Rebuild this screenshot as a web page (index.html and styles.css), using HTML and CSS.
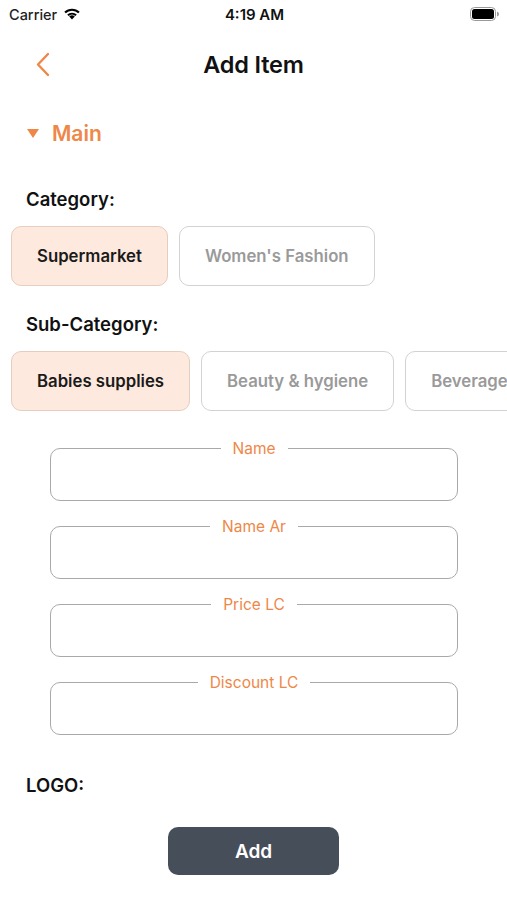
FILE: index.html
```html
<!DOCTYPE html>
<html>
<head>
<meta charset="utf-8">
<link rel="stylesheet" href="styles.css">
</head>
<body>
<div class="screen">
  <div class="status">
    <div class="status-left">
      <span class="carrier">Carrier</span>
      <svg class="wifi" width="18" height="13" viewBox="0 0 18 13">
        <path d="M9 12.5 L6.2 9.6 A4 4 0 0 1 11.8 9.6 Z" fill="#000"/>
        <path d="M4.2 7.6 A6.9 6.9 0 0 1 13.8 7.6 L12.4 9 A5 5 0 0 0 5.6 9 Z" fill="#000"/>
        <path d="M1.3 4.8 A11 11 0 0 1 16.7 4.8 L15.2 6.3 A8.9 8.9 0 0 0 2.8 6.3 Z" fill="#000"/>
      </svg>
    </div>
    <div class="time">4:19 AM</div>
    <div class="status-right">
      <svg width="30" height="14" viewBox="0 0 30 14">
        <rect x="0.5" y="0.5" width="25" height="13" rx="4" fill="none" stroke="#999" stroke-width="1"/>
        <rect x="2" y="2" width="22" height="10" rx="2.5" fill="#000"/>
        <path d="M27 4.5 Q29 5 29 7 Q29 9 27 9.5 Z" fill="#999"/>
      </svg>
    </div>
  </div>

  <div class="nav">
    <div class="nav-left">
      <svg width="16" height="25" viewBox="0 0 16 25">
        <path d="M13 2 L3 12.5 L13 23" fill="none" stroke="#EE8748" stroke-width="2.4" stroke-linecap="round" stroke-linejoin="round"/>
      </svg>
    </div>
    <div class="nav-title">Add Item</div>
    <div></div>
  </div>

  <div class="section-head">
    <span class="tri"></span>
    <span class="section-title">Main</span>
  </div>

  <div class="label label-cat">Category:</div>
  <div class="chips">
    <div class="chip selected">Supermarket</div>
    <div class="chip">Women's Fashion</div>
  </div>

  <div class="label label-sub">Sub-Category:</div>
  <div class="chips">
    <div class="chip selected">Babies supplies</div>
    <div class="chip">Beauty &amp; hygiene</div>
    <div class="chip">Beverages</div>
  </div>

  <div class="fields">
    <fieldset class="field"><legend>Name</legend><div class="field-body"></div></fieldset>
    <fieldset class="field"><legend>Name Ar</legend><div class="field-body"></div></fieldset>
    <fieldset class="field"><legend>Price LC</legend><div class="field-body"></div></fieldset>
    <fieldset class="field"><legend>Discount LC</legend><div class="field-body"></div></fieldset>
  </div>

  <div class="label label-logo">LOGO:</div>

  <div class="actions">
    <button class="add-btn">Add</button>
  </div>
</div>
</body>
</html>
```

FILE: styles.css
```css
* { box-sizing: border-box; }
html, body { margin: 0; padding: 0; background: #fff; }
body {
  font-family: Inter, "Noto Sans", "Liberation Sans", sans-serif;
  color: #111;
}
.screen {
  width: 507px;
  height: 900px;
  overflow: hidden;
}
.status {
  height: 28px;
  display: grid;
  grid-template-columns: 1fr auto 1fr;
  align-items: center;
  padding: 0 7px 0 9px;
}
.status-left { display: flex; align-items: center; gap: 6px; }
.carrier { font-size: 14.5px; font-weight: 500; color: #222; }
.wifi { margin-top: -2px; }
.time { font-size: 15px; font-weight: 600; color: #111; }
.status-right { display: flex; justify-content: flex-end; }

.nav {
  margin-top: 14px;
  height: 44px;
  display: grid;
  grid-template-columns: 1fr auto 1fr;
  align-items: center;
}
.nav-left { padding-left: 35px; display: flex; align-items: center; }
.nav-title { font-size: 23.5px; font-weight: 600; color: #111; letter-spacing: -0.2px; }

.section-head {
  margin-top: 35px;
  height: 24px;
  display: flex;
  align-items: center;
  padding-left: 27px;
  gap: 13px;
}
.tri {
  width: 0; height: 0;
  border-left: 6.5px solid transparent;
  border-right: 6.5px solid transparent;
  border-top: 9px solid #EE8748;
}
.section-title { font-size: 21px; font-weight: 600; color: #EE8748; }

.label {
  height: 22px;
  line-height: 22px;
  padding-left: 26px;
  font-size: 18.5px;
  font-weight: 600;
  color: #111;
}
.label-cat { margin-top: 43px; }
.label-sub { margin-top: 27px; }
.label-logo { margin-top: 39px; }

.chips {
  margin-top: 16px;
  display: flex;
  gap: 11px;
  padding-left: 11px;
  overflow: hidden;
  white-space: nowrap;
}
.chip {
  flex-shrink: 0;
  height: 60px;
  padding: 0 25px;
  display: flex;
  align-items: center;
  border: 1px solid #D2D2D2;
  border-radius: 10px;
  font-size: 16.75px;
  font-weight: 600;
  color: #9A9A9A;
  background: #fff;
}
.chip.selected {
  background: #FDE9DE;
  border-color: #E6CDC0;
  color: #1a1a1a;
}

.fields {
  margin-top: 27px;
  padding: 0 49px 0 50px;
  display: flex;
  flex-direction: column;
  gap: 15px;
}
.field {
  margin: 0;
  padding: 0;
  border: 1px solid #A9A9A9;
  border-radius: 10px;
  min-width: 0;
}
.field legend {
  margin: 0 auto;
  padding: 1px 12px 0;
  height: 20px;
  line-height: 20px;
  font-size: 15.5px;
  color: #EE8748;
}
.field-body { height: 42px; }

.actions {
  margin-top: 31px;
  display: flex;
  justify-content: center;
}
.add-btn {
  width: 171px;
  height: 48px;
  border: none;
  border-radius: 10px;
  background: #464E59;
  color: #fff;
  font-family: inherit;
  font-size: 19px;
  font-weight: 600;
}
```
